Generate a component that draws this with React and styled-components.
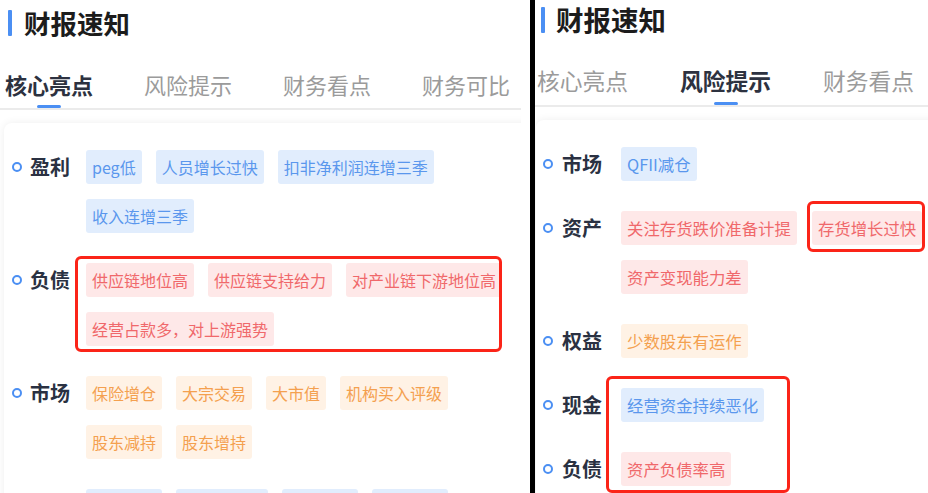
import React from "react";
import styled, { createGlobalStyle, ThemeProvider, css } from "styled-components";

const GlobalStyle = createGlobalStyle`
  html, body { margin: 0; padding: 0; background: #fff; overflow: hidden; }
  body { font-family: "Noto Sans CJK SC", "Noto Sans", sans-serif; }
  #root { width: 928px; height: 493px; }
  * { box-sizing: border-box; }
`;

const leftTheme = {
  shiftY: 0, barLeft: 8, titleGap: 12, titleFont: 26.5,
  tabPadLeft: 5, tabFont: 22, tabGap: 51,
  innerWidth: 540, cardLeft: 4, cardWidth: 530,
  dotLeft: 8, labelGap: 8, headWidth: 82, tagFont: 16, colGap: 14,
};

const rightTheme = {
  shiftY: -3, barLeft: 6, titleGap: 11, titleFont: 27.5,
  tabPadLeft: 2, tabFont: 22.75, tabGap: 52,
  innerWidth: 410, cardLeft: 1, cardWidth: 408,
  dotLeft: 7, labelGap: 9, headWidth: 85, tagFont: 16.4, colGap: 15,
};

const Screen = styled.div`
  display: flex;
  width: 928px;
  height: 493px;
  background: #fff;
`;

const Panel = styled.div`
  flex: ${(p) => (p.$fill ? "1 1 auto" : "0 0 auto")};
  width: ${(p) => (p.$width ? `${p.$width}px` : "auto")};
  height: 100%;
  overflow: hidden;
  margin-right: ${(p) => p.$gapRight || 0}px;
`;

const Inner = styled.div`
  width: ${(p) => p.theme.innerWidth}px;
  margin-top: ${(p) => p.theme.shiftY}px;
`;

const Divider = styled.div`
  flex: 0 0 5px;
  height: 100%;
  background: #000;
`;

const TitleRow = styled.div`
  display: flex;
  align-items: center;
  height: 45px;
  padding-left: ${(p) => p.theme.barLeft}px;
  gap: ${(p) => p.theme.titleGap}px;
`;

const TitleBar = styled.span`
  width: 4px;
  height: 26px;
  background: #4b8ff3;
  border-radius: 1px;
`;

const TitleText = styled.h2`
  margin: 0;
  font-size: ${(p) => p.theme.titleFont}px;
  font-weight: 700;
  color: #1c1c1c;
  line-height: 45px;
  white-space: nowrap;
`;

const Tabs = styled.div`
  display: flex;
  margin-top: 15px;
  padding-left: ${(p) => p.theme.tabPadLeft}px;
  gap: ${(p) => p.theme.tabGap}px;
  border-bottom: 2px solid #ebebeb;
`;

const Tab = styled.div`
  position: relative;
  flex-shrink: 0;
  height: 48px;
  line-height: 48px;
  font-size: ${(p) => p.theme.tabFont}px;
  white-space: nowrap;
  color: ${(p) => (p.$active ? "#2d3240" : "#9b9b9b")};
  font-weight: ${(p) => (p.$active ? 700 : 400)};
  ${(p) =>
    p.$active &&
    css`
      &::after {
        content: "";
        position: absolute;
        left: 50%;
        bottom: 0;
        width: 24px;
        height: 3px;
        margin-left: -12px;
        border-radius: 2px;
        background: #4b8ff3;
      }
    `}
`;

const Card = styled.div`
  margin-top: 13px;
  margin-left: ${(p) => p.theme.cardLeft}px;
  width: ${(p) => p.theme.cardWidth}px;
  padding: 27px 10px 30px 0;
  border-radius: 8px;
  background: #fff;
  box-shadow: 0 0 8px rgba(0, 0, 0, 0.07);
  display: flex;
  flex-direction: column;
  gap: 30px;
`;

const Row = styled.div`
  display: flex;
  align-items: flex-start;
`;

const Head = styled.div`
  flex: 0 0 ${(p) => p.theme.headWidth}px;
  display: flex;
  align-items: center;
  height: 34px;
  padding-left: ${(p) => p.theme.dotLeft}px;
`;

const Dot = styled.span`
  width: 10px;
  height: 10px;
  border: 2px solid #4b8ff3;
  border-radius: 50%;
  margin-right: ${(p) => p.theme.labelGap}px;
  flex-shrink: 0;
`;

const Label = styled.span`
  font-size: 20px;
  font-weight: 700;
  color: #2a3142;
  line-height: 34px;
  white-space: nowrap;
`;

const TagGroup = styled.div`
  position: relative;
  flex: 1 1 auto;
  display: flex;
  flex-wrap: wrap;
  column-gap: ${(p) => p.theme.colGap}px;
  row-gap: 15px;
`;

const tones = {
  blue: { bg: "#e1edfd", fg: "#5a97ed" },
  red: { bg: "#fee8e8", fg: "#f0686b" },
  orange: { bg: "#fff2e5", fg: "#f4a04f" },
};

const Tag = styled.span`
  position: relative;
  height: 34px;
  line-height: 34px;
  padding: 0 6px;
  border-radius: 3px;
  font-size: ${(p) => p.theme.tagFont}px;
  white-space: nowrap;
  background: ${(p) => tones[p.$tone].bg};
  color: ${(p) => tones[p.$tone].fg};
`;

const Highlight = styled.span`
  position: absolute;
  left: ${(p) => p.$l}px;
  top: ${(p) => p.$t}px;
  width: ${(p) => p.$w}px;
  height: ${(p) => p.$h}px;
  border: 3px solid #fb2418;
  border-radius: 6px;
  pointer-events: none;
`;

const leftRows = [
  { label: "盈利", tone: "blue", tags: ["peg低", "人员增长过快", "扣非净利润连增三季", "收入连增三季"] },
  {
    label: "负债", tone: "red",
    tags: ["供应链地位高", "供应链支持给力", "对产业链下游地位高", "经营占款多，对上游强势"],
    box: { l: -11, t: -7, w: 427, h: 96 },
  },
  { label: "市场", tone: "orange", tags: ["保险增仓", "大宗交易", "大市值", "机构买入评级", "股东减持", "股东增持"] },
  { label: "估值", tone: "blue", tags: ["市盈率低", "市净率偏低", "股息率高", "估值修复"] },
];

const rightRows = [
  { label: "市场", tone: "blue", tags: ["QFII减仓"] },
  {
    label: "资产", tone: "red",
    tags: ["关注存货跌价准备计提", "存货增长过快", "资产变现能力差"],
    tagBox: { index: 1, l: -5, t: -10, w: 118, h: 51 },
  },
  { label: "权益", tone: "orange", tags: ["少数股东有运作"] },
  { label: "现金", tone: "blue", tags: ["经营资金持续恶化"], box: { l: -15, t: -12, w: 184, h: 117 } },
  { label: "负债", tone: "red", tags: ["资产负债率高"] },
];

const tabNames = ["核心亮点", "风险提示", "财务看点", "财务可比", "行业对比"];

function Report({ active, rows }) {
  return (
    <Inner>
      <TitleRow>
        <TitleBar />
        <TitleText>财报速知</TitleText>
      </TitleRow>
      <Tabs>
        {tabNames.map((t, i) => (
          <Tab key={t} $active={i === active}>{t}</Tab>
        ))}
      </Tabs>
      <Card>
        {rows.map((r) => (
          <Row key={r.label}>
            <Head>
              <Dot />
              <Label>{r.label}</Label>
            </Head>
            <TagGroup>
              {r.tags.map((t, i) => (
                <Tag key={t} $tone={r.tone}>
                  {t}
                  {r.tagBox && r.tagBox.index === i && (
                    <Highlight $l={r.tagBox.l} $t={r.tagBox.t} $w={r.tagBox.w} $h={r.tagBox.h} />
                  )}
                </Tag>
              ))}
              {r.box && <Highlight $l={r.box.l} $t={r.box.t} $w={r.box.w} $h={r.box.h} />}
            </TagGroup>
          </Row>
        ))}
      </Card>
    </Inner>
  );
}

export default function App() {
  return (
    <>
      <GlobalStyle />
      <Screen>
        <Panel $width={521} $gapRight={9}>
          <ThemeProvider theme={leftTheme}>
            <Report active={0} rows={leftRows} />
          </ThemeProvider>
        </Panel>
        <Divider />
        <Panel $fill>
          <ThemeProvider theme={rightTheme}>
            <Report active={1} rows={rightRows} />
          </ThemeProvider>
        </Panel>
      </Screen>
    </>
  );
}
